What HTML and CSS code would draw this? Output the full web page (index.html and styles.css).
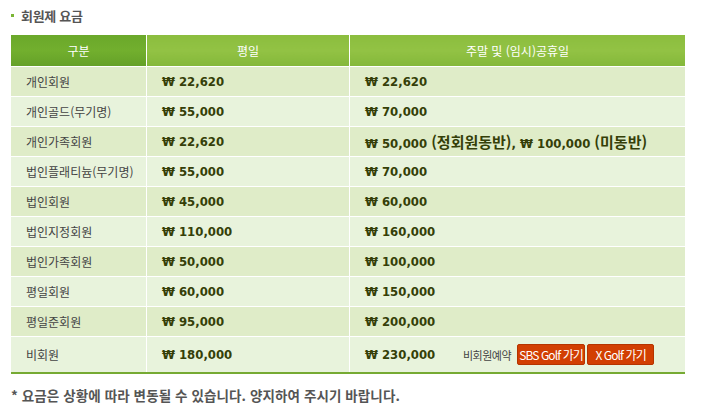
FILE: index.html
```html
<!DOCTYPE html>
<html lang="ko">
<head>
<meta charset="utf-8">
<link rel="stylesheet" href="styles.css">
</head>
<body>
<div class="wrap">
  <h3 class="title"><span class="dot"></span>회원제 요금</h3>
  <table class="fee">
    <thead>
      <tr><th class="c1">구분</th><th class="c2">평일</th><th class="c3">주말 및 (임시)공휴일</th></tr>
    </thead>
    <tbody>
      <tr class="odd"><td class="name">개인회원</td><td class="price">₩ 22,620</td><td class="price">₩ 22,620</td></tr>
      <tr class="even"><td class="name">개인골드(무기명)</td><td class="price">₩ 55,000</td><td class="price">₩ 70,000</td></tr>
      <tr class="odd"><td class="name">개인가족회원</td><td class="price">₩ 22,620</td><td class="price">₩ 50,000 <span class="ko">(정회원동반)</span>, ₩ 100,000 <span class="ko">(미동반)</span></td></tr>
      <tr class="even"><td class="name">법인플래티늄(무기명)</td><td class="price">₩ 55,000</td><td class="price">₩ 70,000</td></tr>
      <tr class="odd"><td class="name">법인회원</td><td class="price">₩ 45,000</td><td class="price">₩ 60,000</td></tr>
      <tr class="even"><td class="name">법인지정회원</td><td class="price">₩ 110,000</td><td class="price">₩ 160,000</td></tr>
      <tr class="odd"><td class="name">법인가족회원</td><td class="price">₩ 50,000</td><td class="price">₩ 100,000</td></tr>
      <tr class="even"><td class="name">평일회원</td><td class="price">₩ 60,000</td><td class="price">₩ 150,000</td></tr>
      <tr class="odd"><td class="name">평일준회원</td><td class="price">₩ 95,000</td><td class="price">₩ 200,000</td></tr>
      <tr class="even last"><td class="name">비회원</td><td class="price">₩ 180,000</td><td class="price"><div class="nm"><span class="amt">₩ 230,000</span><span class="lbl">비회원예약</span><a class="btn b1">SBS Golf 가기</a><a class="btn b2">X Golf 가기</a></div></td></tr>
    </tbody>
  </table>
  <p class="note">* 요금은 상황에 따라 변동될 수 있습니다. 양지하여 주시기 바랍니다.</p>
</div>
</body>
</html>
```
FILE: styles.css
```css
html, body { margin: 0; padding: 0; background: #fff; }
body { font-family: "Noto Sans CJK KR", "Noto Sans", sans-serif; color: #333; }
.wrap { padding: 6px 0 0 11px; width: 674px; }
.title { margin: 0; height: 19px; display: flex; align-items: center; font-size: 13px; font-weight: bold; color: #555; letter-spacing: -0.3px; }
.dot { width: 3px; height: 3px; background: #7ab535; margin-right: 7px; }
.fee { margin-top: 10px; width: 674px; border-collapse: collapse; table-layout: fixed; border-bottom: 2px solid #76aa33; }
.fee th { height: 31px; padding: 0; color: #fff; font-weight: normal; font-size: 12px; text-align: center; border-bottom: 1px solid #fff; background: linear-gradient(#8bbd3e, #92c244 50%, #84b83a); }
.fee th.c1 { width: 135px; background: linear-gradient(#6aa82a, #72af2e 50%, #65a128); border-right: 1px solid #fff; }
.fee th.c2 { width: 202px; border-right: 1px solid #fff; }
.fee td { height: 29px; padding: 0 0 0 15px; border-bottom: 1px solid #fff; border-right: 1px solid #fff; }
.fee td:last-child { border-right: 0; }
.fee tr.odd td { background: #dfecc8; }
.fee tr.even td { background: #e8f3dc; }
.fee tr.last td { height: 35px; border-bottom: 0; }
.name { font-size: 12px; color: #444; }
.price { font-family: "DejaVu Sans Condensed", "DejaVu Sans", sans-serif; font-stretch: condensed; font-weight: bold; font-size: 13px; color: #353f08; }
.ko { font-family: "Noto Sans CJK KR", sans-serif; font-size: 15px; letter-spacing: 0; }
.nm { display: flex; align-items: center; }
.amt { width: 98px; }
.lbl { font-family: "Noto Sans CJK KR", sans-serif; font-weight: normal; font-size: 11px; color: #444; margin-right: 6px; letter-spacing: -0.5px; }
.btn { display: inline-flex; align-items: center; justify-content: center; height: 19px; width: 65px; margin-right: 2px; background: #d23f02; border: 1px solid #b53400; border-radius: 2px; color: #fff; font-family: "Noto Sans CJK KR", sans-serif; font-weight: normal; font-size: 12px; letter-spacing: -0.9px; }
.b1 { width: 66px; }
.note { margin: 11px 0 0; font-size: 13.5px; font-weight: bold; color: #555; letter-spacing: 0.1px; }
```
